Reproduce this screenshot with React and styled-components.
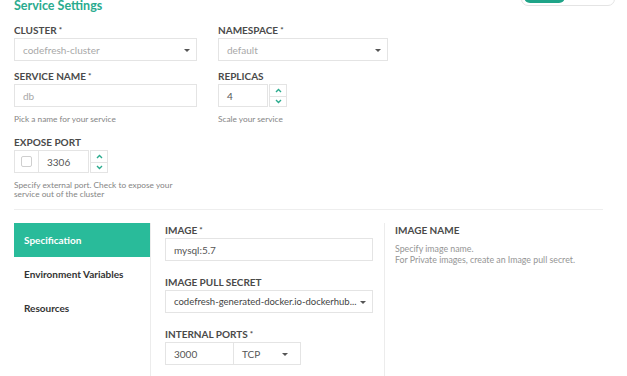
import styled, { createGlobalStyle } from "styled-components";

const GlobalStyle = createGlobalStyle`
  body {
    margin: 0;
    background: #fff;
    font-family: Lato, "Open Sans", sans-serif;
    color: #4a4a4a;
  }
`;

const Page = styled.div`
  padding: 0 24px 0 14px;
  overflow: hidden;
  height: 376px;
`;

const Header = styled.div`
  display: flex;
  justify-content: space-between;
  align-items: flex-start;
  margin-top: -10px;
  height: 34px;
`;

const Title = styled.h2`
  margin: 9px 0 0;
  font-size: 12.5px;
  line-height: 14px;
  font-weight: 700;
  color: #2aab8e;
`;

const Toggle = styled.div`
  width: 88px;
  height: 12px;
  margin-right: -12px;
  border: 1px solid #e4e4e4;
  border-radius: 0 0 7px 7px;
  padding: 0 2px 2px;
  box-sizing: content-box;
  display: flex;
`;

const ToggleOn = styled.div`
  width: 41px;
  background: #1fa488;
  border-radius: 0 0 6px 6px;
`;

const FormGrid = styled.div`
  display: grid;
  grid-template-columns: 183px 170px;
  column-gap: 21px;
  row-gap: 9px;
`;

const Field = styled.div`
  display: flex;
  flex-direction: column;
  align-items: flex-start;
  grid-column: ${(p) => p.$col || "auto"};
`;

const Label = styled.label`
  font-size: 10px;
  line-height: 12px;
  font-weight: 700;
  color: #4a4a4a;
  margin-bottom: 2px;
  white-space: nowrap;
`;

const Req = styled.span`
  font-size: 8px;
  vertical-align: top;
  margin-left: 2px;
`;

const Box = styled.div`
  box-sizing: border-box;
  height: 23px;
  width: ${(p) => p.$w || "100%"};
  border: 1px solid #e4e4e4;
  display: flex;
  align-items: center;
  justify-content: space-between;
  padding: 0 ${(p) => (p.$select ? "6px" : "8px")} 0 8px;
  font-size: ${(p) => (p.$small ? "9.5px" : "10px")};
  color: ${(p) => (p.$muted ? "#a8a8a8" : "#555")};
  background: #fff;
  white-space: nowrap;
  overflow: hidden;
`;

const Caret = styled.span`
  flex: none;
  width: 0;
  height: 0;
  border-left: 3.5px solid transparent;
  border-right: 3.5px solid transparent;
  border-top: 3.5px solid #555;
  margin-top: 1px;
`;

const Help = styled.div`
  margin-top: 8px;
  margin-bottom: 3px;
  font-size: 8.3px;
  line-height: 9px;
  color: #858585;
  max-width: ${(p) => p.$max || "none"};
`;

const NumberWrap = styled.div`
  display: flex;
  height: 23px;
`;

const NumberInput = styled.div`
  box-sizing: border-box;
  width: ${(p) => p.$w};
  border: 1px solid #e4e4e4;
  display: flex;
  align-items: center;
  padding-left: 8px;
  font-size: 10px;
  color: #555;
`;

const Spinner = styled.div`
  box-sizing: border-box;
  width: 18px;
  margin-left: 1px;
  border: 1px solid #e4e4e4;
  display: grid;
  grid-template-rows: 1fr 1fr;
`;

const SpinHalf = styled.div`
  display: flex;
  align-items: center;
  justify-content: center;
  border-top: ${(p) => (p.$down ? "1px solid #e4e4e4" : "none")};
`;

const CheckCell = styled.div`
  box-sizing: border-box;
  width: 24px;
  border: 1px solid #e4e4e4;
  border-right: none;
  display: flex;
  align-items: center;
  justify-content: center;
`;

const Check = styled.span`
  width: 9px;
  height: 9px;
  border: 1px solid #cfcfcf;
  border-radius: 2px;
`;

const Divider = styled.hr`
  border: none;
  border-top: 1px solid #eeeeee;
  margin: 7px 0 13px;
`;

const Section = styled.div`
  display: flex;
  height: 160px;
`;

const Nav = styled.nav`
  width: 136px;
  border-right: 1px solid #ececec;
  display: flex;
  flex-direction: column;
`;

const NavItem = styled.div`
  height: 34px;
  display: flex;
  align-items: center;
  padding-left: 10px;
  font-size: 10px;
  font-weight: 700;
  color: ${(p) => (p.$active ? "#fff" : "#333")};
  background: ${(p) => (p.$active ? "#29bb9a" : "transparent")};
`;

const Main = styled.div`
  width: 208px;
  padding: 1px 11px 0 14px;
  border-right: 1px solid #ececec;
  display: flex;
  flex-direction: column;
  gap: 15px;
`;

const Side = styled.div`
  padding: 1px 0 0 10px;
  display: flex;
  flex-direction: column;
  align-items: flex-start;
`;

const SideText = styled.p`
  margin: 5px 0 0;
  font-size: 8.8px;
  line-height: 11px;
  color: #959595;
`;

const Ports = styled.div`
  display: flex;
`;

function Chevron({ up }) {
  return (
    <svg width="7" height="5" viewBox="0 0 7 5">
      <polyline
        points={up ? "1,4 3.5,1.5 6,4" : "1,1 3.5,3.5 6,1"}
        fill="none"
        stroke="#2aab8e"
        strokeWidth="1.4"
      />
    </svg>
  );
}

function NumberField({ value, w, check }) {
  return (
    <NumberWrap>
      {check && (
        <CheckCell>
          <Check />
        </CheckCell>
      )}
      <NumberInput $w={w}>{value}</NumberInput>
      <Spinner>
        <SpinHalf>
          <Chevron up />
        </SpinHalf>
        <SpinHalf $down>
          <Chevron />
        </SpinHalf>
      </Spinner>
    </NumberWrap>
  );
}

export default function App() {
  return (
    <>
      <GlobalStyle />
      <Page>
        <Header>
          <Title>Service Settings</Title>
          <Toggle>
            <ToggleOn />
          </Toggle>
        </Header>

        <FormGrid>
          <Field>
            <Label>
              CLUSTER<Req>*</Req>
            </Label>
            <Box $muted $select>
              codefresh-cluster <Caret />
            </Box>
          </Field>
          <Field>
            <Label>
              NAMESPACE<Req>*</Req>
            </Label>
            <Box $muted $select>
              default <Caret />
            </Box>
          </Field>

          <Field>
            <Label>
              SERVICE NAME<Req>*</Req>
            </Label>
            <Box $muted>db</Box>
            <Help>Pick a name for your service</Help>
          </Field>
          <Field>
            <Label>REPLICAS</Label>
            <NumberField value="4" w="50px" />
            <Help>Scale your service</Help>
          </Field>

          <Field $col="1 / 2">
            <Label>EXPOSE PORT</Label>
            <NumberField value="3306" w="51px" check />
            <Help $max="165px">
              Specify external port. Check to expose your service out of the
              cluster
            </Help>
          </Field>
        </FormGrid>

        <Divider />

        <Section>
          <Nav>
            <NavItem $active>Specification</NavItem>
            <NavItem>Environment Variables</NavItem>
            <NavItem>Resources</NavItem>
          </Nav>
          <Main>
            <Field>
              <Label>
                IMAGE<Req>*</Req>
              </Label>
              <Box>mysql:5.7</Box>
            </Field>
            <Field>
              <Label>IMAGE PULL SECRET</Label>
              <Box $select $small style={{ color: "#444" }}>
                codefresh-generated-docker.io-dockerhub... <Caret />
              </Box>
            </Field>
            <Field>
              <Label>
                INTERNAL PORTS<Req>*</Req>
              </Label>
              <Ports>
                <Box $w="69px">3000</Box>
                <Box $w="67px" $select style={{ borderLeft: "none", paddingRight: "12px" }}>
                  TCP <Caret />
                </Box>
              </Ports>
            </Field>
          </Main>
          <Side>
            <Label>IMAGE NAME</Label>
            <SideText>
              Specify image name.
              <br />
              For Private images, create an Image pull secret.
            </SideText>
          </Side>
        </Section>
      </Page>
    </>
  );
}
